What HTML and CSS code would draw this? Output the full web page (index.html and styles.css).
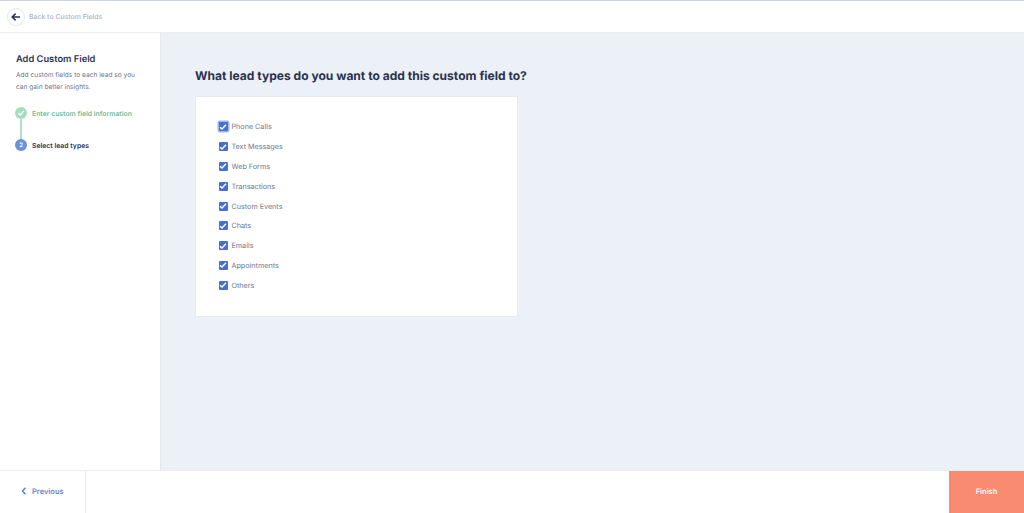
FILE: index.html
```html
<!DOCTYPE html>
<html lang="en">
<head>
<meta charset="utf-8">
<title>Add Custom Field</title>
<link rel="stylesheet" href="styles.css">
</head>
<body>
<div class="app">
  <header class="topbar">
    <span class="back-circle">
      <svg width="10" height="10" viewBox="0 0 10 10" fill="none"><path d="M9 5H1.5M4.6 1.6 1.2 5l3.4 3.4" stroke="#2b3350" stroke-width="1.5"/></svg>
    </span>
    <span class="back-label">Back to Custom Fields</span>
  </header>
  <div class="middle">
    <aside class="sidebar">
      <h2 class="side-title">Add Custom Field</h2>
      <p class="side-desc">Add custom fields to each lead so you can gain better insights.</p>
      <ol class="steps">
        <li class="step done">
          <span class="dot dot-done">
            <svg width="8" height="8" viewBox="0 0 8 8" fill="none"><path d="M1.2 4.2 3.2 6 6.8 2" stroke="#fff" stroke-width="1.3"/></svg>
          </span>
          <span class="step-label">Enter custom field information</span>
        </li>
        <li class="step current">
          <span class="dot dot-current">2</span>
          <span class="step-label">Select lead types</span>
        </li>
      </ol>
    </aside>
    <main class="content">
      <h1 class="question">What lead types do you want to add this custom field to?</h1>
      <section class="card">
        <label class="option"><span class="box focus"><svg width="8" height="8" viewBox="0 0 8 8" fill="none"><path d="M1 4.2 3 6 7 1.8" stroke="#fff" stroke-width="1.4"/></svg></span>Phone Calls</label>
        <label class="option"><span class="box"><svg width="8" height="8" viewBox="0 0 8 8" fill="none"><path d="M1 4.2 3 6 7 1.8" stroke="#fff" stroke-width="1.4"/></svg></span>Text Messages</label>
        <label class="option"><span class="box"><svg width="8" height="8" viewBox="0 0 8 8" fill="none"><path d="M1 4.2 3 6 7 1.8" stroke="#fff" stroke-width="1.4"/></svg></span>Web Forms</label>
        <label class="option"><span class="box"><svg width="8" height="8" viewBox="0 0 8 8" fill="none"><path d="M1 4.2 3 6 7 1.8" stroke="#fff" stroke-width="1.4"/></svg></span>Transactions</label>
        <label class="option"><span class="box"><svg width="8" height="8" viewBox="0 0 8 8" fill="none"><path d="M1 4.2 3 6 7 1.8" stroke="#fff" stroke-width="1.4"/></svg></span>Custom Events</label>
        <label class="option"><span class="box"><svg width="8" height="8" viewBox="0 0 8 8" fill="none"><path d="M1 4.2 3 6 7 1.8" stroke="#fff" stroke-width="1.4"/></svg></span>Chats</label>
        <label class="option"><span class="box"><svg width="8" height="8" viewBox="0 0 8 8" fill="none"><path d="M1 4.2 3 6 7 1.8" stroke="#fff" stroke-width="1.4"/></svg></span>Emails</label>
        <label class="option"><span class="box"><svg width="8" height="8" viewBox="0 0 8 8" fill="none"><path d="M1 4.2 3 6 7 1.8" stroke="#fff" stroke-width="1.4"/></svg></span>Appointments</label>
        <label class="option"><span class="box"><svg width="8" height="8" viewBox="0 0 8 8" fill="none"><path d="M1 4.2 3 6 7 1.8" stroke="#fff" stroke-width="1.4"/></svg></span>Others</label>
      </section>
    </main>
  </div>
  <footer class="footer">
    <a class="prev">
      <svg width="6" height="8" viewBox="0 0 6 8" fill="none"><path d="M4.5 .8 1.5 4l3 3.2" stroke="#5f7fc9" stroke-width="1.4"/></svg>
      <span>Previous</span>
    </a>
    <a class="finish">Finish</a>
  </footer>
</div>
</body>
</html>
```
FILE: styles.css
```css
* { box-sizing: border-box; }
html, body { margin: 0; padding: 0; }
body {
  width: 1024px;
  height: 513px;
  overflow: hidden;
  background: #fff;
  font-family: Inter, "Liberation Sans", sans-serif;
  text-rendering: geometricPrecision;
}
.app { display: flex; flex-direction: column; height: 513px; }
.topbar {
  flex: 0 0 33px;
  display: flex;
  align-items: center;
  gap: 4px;
  padding-left: 7px;
  background: #fff;
  border-top: 1px solid #ccd4e4;
  border-bottom: 1px solid #e9edf4;
}
.back-circle {
  width: 18px;
  height: 18px;
  border: 1px solid #e3e7ef;
  border-radius: 50%;
  display: flex;
  align-items: center;
  justify-content: center;
}
.back-label { font-size: 6.9px; font-weight: 500; color: #aab2c5; }
.middle { flex: 1; display: flex; min-height: 0; }
.sidebar {
  flex: 0 0 161px;
  padding: 20px 16px 0;
  background: #fff;
  border-right: 1px solid #e3e8f1;
}
.side-title { margin: 0; font-size: 9.3px; line-height: 13px; font-weight: 600; color: #2b3350; }
.side-desc { margin: 3px 0 0; font-size: 6.6px; line-height: 12px; color: #6f7790; width: 128px; }
.steps { list-style: none; margin: 14px 0 0 -1px; padding: 0; }
.step {
  position: relative;
  display: flex;
  align-items: center;
  gap: 5px;
  height: 12px;
  font-size: 6.85px;
  font-weight: 600;
}
.step + .step { margin-top: 20px; }
.step.done { color: #6fbc97; }
.step.current { color: #2b3350; }
.step.done::after {
  content: "";
  position: absolute;
  left: 5.25px;
  top: 11px;
  width: 1.5px;
  height: 22px;
  background: #b0e0c8;
}
.dot {
  flex: 0 0 12px;
  width: 12px;
  height: 12px;
  border-radius: 50%;
  display: flex;
  align-items: center;
  justify-content: center;
  color: #fff;
  font-size: 6px;
}
.dot-done { background: #a5dcc0; }
.dot-current { background: #6b91dc; }
.content { flex: 1; padding: 35px 0 0 34px; background: #ecf0f7; min-width: 0; }
.question { margin: 0; font-size: 12.05px; line-height: 15px; font-weight: 650; color: #2b3350; }
.card {
  width: 323px;
  height: 221px;
  margin-top: 13px;
  padding: 24px 23px 0;
  background: #fff;
  border: 1px solid #e6eaf2;
  display: flex;
  flex-direction: column;
  gap: 8px;
}
.option {
  display: flex;
  align-items: center;
  gap: 4px;
  height: 11.8px;
  font-size: 7.2px;
  color: #6f7790;
}
.box {
  flex: 0 0 9px;
  width: 9px;
  height: 9px;
  margin-left: -0.5px;
  border-radius: 1px;
  background: #4570cf;
  display: flex;
  align-items: center;
  justify-content: center;
}
.box.focus { box-shadow: 0 0 0 1.5px #9db4e8; }
.footer {
  flex: 0 0 43px;
  display: flex;
  justify-content: space-between;
  background: #fff;
  border-top: 1px solid #e9edf4;
}
.prev {
  width: 86px;
  display: flex;
  align-items: center;
  gap: 5px;
  padding-left: 21px;
  padding-bottom: 2px;
  font-size: 7.5px;
  font-weight: 600;
  color: #6b87cc;
  border-right: 1px solid #e9edf4;
}
.finish {
  width: 75px;
  display: flex;
  align-items: center;
  justify-content: center;
  padding-bottom: 2px;
  background: #f98b70;
  color: #fff;
  font-size: 7.5px;
  font-weight: 600;
}
```
